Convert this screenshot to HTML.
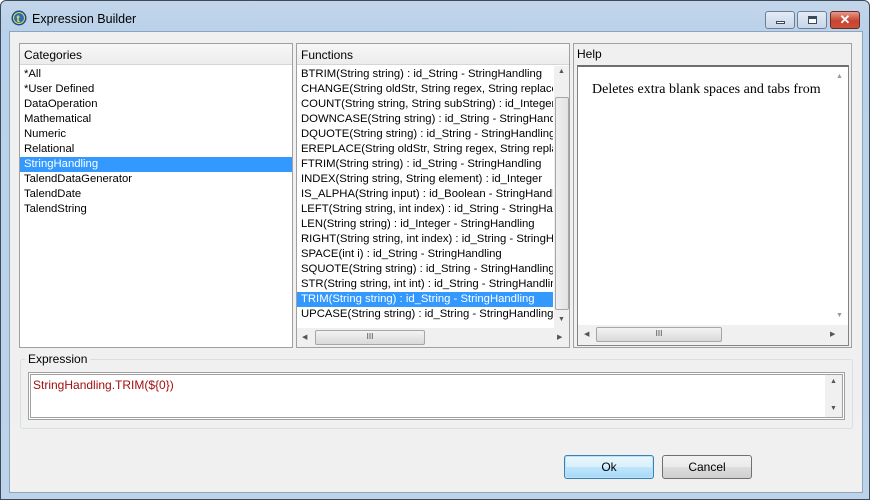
<!DOCTYPE html>
<html><head><style>
*{box-sizing:border-box;margin:0;padding:0}
body{width:870px;height:500px;overflow:hidden;font-family:"Liberation Sans",sans-serif;font-size:12px;color:#000;background:#fff}
.win{position:absolute;left:0;top:0;width:870px;height:500px;border:1px solid #3c4a5c;border-radius:6px 6px 0 0;background:linear-gradient(#c3d6ea,#b9d1ea 30px,#bcd3ea);}
.title{position:absolute;left:31px;top:11px;font-size:12.5px;color:#000}
.client{position:absolute;left:8px;top:30px;width:854px;height:462px;background:#f0f0f0;border:1px solid #8ea4bd}
.abs{position:absolute}
.panel{position:absolute;background:#fff;border:1px solid #a0a0a0;overflow:hidden}
.hdr{height:21px;background:linear-gradient(#f7f7f7,#ececec);border-bottom:1px solid #d5d5d5;padding:4px 0 0 4px;font-size:12px}
.item{height:15px;line-height:15px;padding-left:4px;white-space:nowrap;font-size:11.3px}
.sel{background:#3399ff;color:#fff}
.sb{position:absolute;background:#f0f0f0}
.thumb{position:absolute;background:linear-gradient(90deg,#f0f0f0,#e2e2e2);border:1px solid #a6a6a6;border-radius:2px}
.hthumb{position:absolute;background:linear-gradient(#f3f3f3,#d9d9d9);border:1px solid #a6a6a6;border-radius:2px;font-size:8px;text-align:center;line-height:12px;color:#444}
.arr{position:absolute;font-size:7px;color:#555}
.btn{position:absolute;height:24px;border:1px solid #707070;border-radius:3px;background:linear-gradient(#f2f2f2,#ebebeb 50%,#dddddd 51%,#cfcfcf);text-align:center;line-height:22px;font-size:12px}
</style></head><body>
<div class="win">
 <svg class="abs" style="left:10px;top:9px" width="16" height="16"><circle cx="8" cy="8" r="7.5" fill="#1a4f8a"/><circle cx="8" cy="8" r="5.5" fill="#2a6fb5" stroke="#e8d84a" stroke-width="1"/><text x="5.5" y="12" font-size="10" fill="#f0e060" font-family="Liberation Sans" font-weight="bold">t</text></svg>
 <div class="title">Expression Builder</div>
 <div class="abs" style="left:764px;top:10px;width:30px;height:18px;border:1px solid #6d7f95;border-radius:3px;background:linear-gradient(#e3ebf5,#c7d6e8)"><div class="abs" style="left:10px;top:9px;width:9px;height:3px;background:#fff;border:1px solid #3a4a5e"></div></div>
 <div class="abs" style="left:796px;top:10px;width:30px;height:18px;border:1px solid #6d7f95;border-radius:3px;background:linear-gradient(#e3ebf5,#c7d6e8)"><div class="abs" style="left:10px;top:4px;width:9px;height:8px;border:1px solid #3a4a5e;border-top-width:3px;background:#fff"></div></div>
 <div class="abs" style="left:829px;top:10px;width:30px;height:18px;border:1px solid #6b2a22;border-radius:3px;background:linear-gradient(#e49a8c,#c7452f 55%,#c8503a);color:#fff;font-weight:bold;text-align:center;line-height:16px;font-size:13px">✕</div>
 <div class="client">
  <!-- Categories -->
  <div class="panel" style="left:9px;top:11px;width:274px;height:305px">
   <div class="hdr">Categories</div>
   <div style="padding-top:2px">
   <div class="item">*All</div><div class="item">*User Defined</div><div class="item">DataOperation</div><div class="item">Mathematical</div><div class="item">Numeric</div><div class="item">Relational</div><div class="item sel">StringHandling</div><div class="item">TalendDataGenerator</div><div class="item">TalendDate</div><div class="item">TalendString</div>
   </div>
  </div>
  <!-- Functions -->
  <div class="panel" style="left:286px;top:11px;width:274px;height:305px">
   <div class="hdr">Functions</div>
   <div style="padding-top:2px;width:256px;overflow:hidden">
   <div class="item">BTRIM(String string) : id_String - StringHandling</div>
   <div class="item">CHANGE(String oldStr, String regex, String replacement)</div>
   <div class="item">COUNT(String string, String subString) : id_Integer</div>
   <div class="item">DOWNCASE(String string) : id_String - StringHandling</div>
   <div class="item">DQUOTE(String string) : id_String - StringHandling</div>
   <div class="item">EREPLACE(String oldStr, String regex, String replacement)</div>
   <div class="item">FTRIM(String string) : id_String - StringHandling</div>
   <div class="item">INDEX(String string, String element) : id_Integer</div>
   <div class="item">IS_ALPHA(String input) : id_Boolean - StringHandling</div>
   <div class="item">LEFT(String string, int index) : id_String - StringHandling</div>
   <div class="item">LEN(String string) : id_Integer - StringHandling</div>
   <div class="item">RIGHT(String string, int index) : id_String - StringHandling</div>
   <div class="item">SPACE(int i) : id_String - StringHandling</div>
   <div class="item">SQUOTE(String string) : id_String - StringHandling</div>
   <div class="item">STR(String string, int int) : id_String - StringHandling</div>
   <div class="item sel">TRIM(String string) : id_String - StringHandling</div>
   <div class="item">UPCASE(String string) : id_String - StringHandling</div>
   </div>
   <div class="sb" style="left:257px;top:22px;width:16px;height:262px"><div class="arr" style="left:4px;top:2px">▲</div><div class="thumb" style="left:1px;top:31px;width:14px;height:213px"></div><div class="arr" style="left:4px;top:250px">▼</div></div>
   <div class="sb" style="left:0;top:284px;width:273px;height:20px"><div class="arr" style="left:5px;top:5px">◀</div><div class="hthumb" style="left:18px;top:2px;width:110px;height:15px">III</div><div class="arr" style="left:260px;top:5px">▶</div></div>
  </div>
  <!-- Help -->
  <div class="abs" style="left:563px;top:11px;width:279px;height:305px;border:1px solid #a0a0a0;background:#f0f0f0">
   <div class="abs" style="left:3px;top:3px">Help</div>
   <div class="abs" style="left:3px;top:21px;width:272px;height:281px;border:1px solid #828282;border-top:2px solid #6e6e6e;background:#fff;overflow:hidden">
    <div class="abs" style="left:14px;top:15px;font-family:'Liberation Serif',serif;font-size:14px;white-space:nowrap;width:238px;overflow:hidden">Deletes extra blank spaces and tabs from</div>
    <div class="sb" style="left:253px;top:0;width:17px;height:258px;background:#fff"><div class="arr" style="left:5px;top:6px;color:#999">▲</div><div class="arr" style="left:5px;top:245px;color:#999">▼</div></div>
    <div class="sb" style="left:0;top:258px;width:270px;height:20px"><div class="arr" style="left:6px;top:5px">◀</div><div class="hthumb" style="left:18px;top:2px;width:126px;height:15px">III</div><div class="arr" style="left:252px;top:5px">▶</div></div>
   </div>
  </div>
  <!-- Expression -->
  <div class="abs" style="left:10px;top:327px;width:833px;height:70px;border:1px solid #d5dfe5;border-radius:3px"></div>
  <div class="abs" style="left:15px;top:320px;background:#f0f0f0;padding:0 3px">Expression</div>
  <div class="abs" style="left:18px;top:340px;width:817px;height:48px;border:3px double #a0a0a0;background:#fff">
   <div class="abs" style="left:2px;top:3px;color:#a01010;font-size:12px">StringHandling.TRIM(${0})</div>
   <div class="sb" style="left:794px;top:0;width:17px;height:42px"><div class="arr" style="left:5px;top:3px">▲</div><div class="arr" style="left:5px;top:30px">▼</div></div>
  </div>
  <!-- Buttons -->
  <div class="btn" style="left:554px;top:423px;width:90px;border-color:#3c7fb1;background:linear-gradient(#eaf6fd,#d9f0fc 50%,#bee6fd 51%,#a7d9f5);box-shadow:inset 0 0 0 1px #b6e4fb">Ok</div>
  <div class="btn" style="left:652px;top:423px;width:90px">Cancel</div>
 </div>
</div>
</body></html>
